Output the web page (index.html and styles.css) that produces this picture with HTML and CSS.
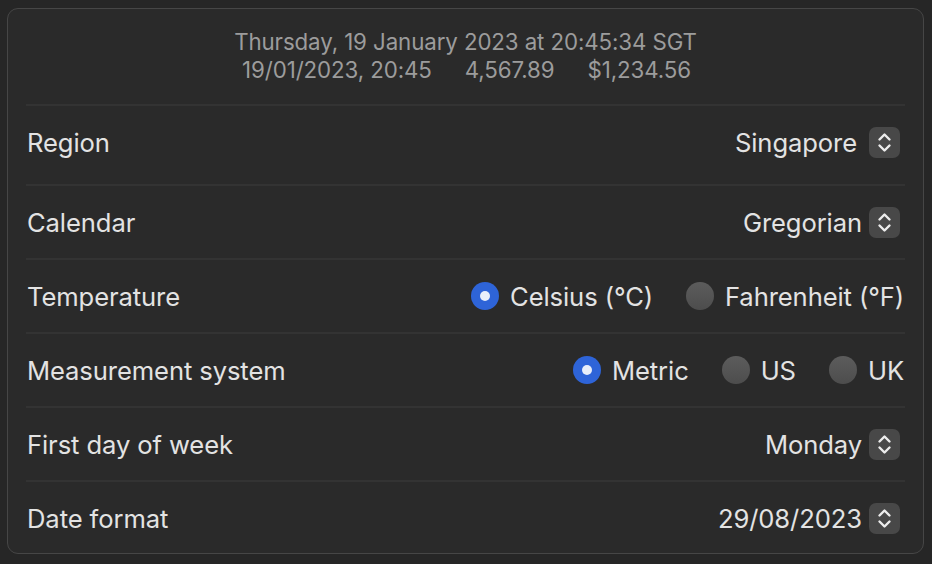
FILE: index.html
```html
<!DOCTYPE html>
<html lang="en">
<head>
<meta charset="utf-8">
<title>Language &amp; Region</title>
<link rel="stylesheet" href="styles.css">
</head>
<body>
<section class="card">
  <header class="preview">
    <div class="preview-line">Thursday, 19 January 2023 at 20:45:34 SGT</div>
    <div class="preview-line preview-values">
      <span>19/01/2023, 20:45</span><span>4,567.89</span><span>$1,234.56</span>
    </div>
  </header>

  <div class="row row-first">
    <span class="label">Region</span>
    <div class="popup popup-region">
      <span class="value">Singapore</span>
      <span class="stepper"><svg viewBox="0 0 31 31" width="31" height="31"><path d="M10.5 12.5 L15.5 7.5 L20.5 12.5 M10.5 18.5 L15.5 23.5 L20.5 18.5"/></svg></span>
    </div>
  </div>

  <div class="row">
    <span class="label">Calendar</span>
    <div class="popup">
      <span class="value">Gregorian</span>
      <span class="stepper"><svg viewBox="0 0 31 31" width="31" height="31"><path d="M10.5 12.5 L15.5 7.5 L20.5 12.5 M10.5 18.5 L15.5 23.5 L20.5 18.5"/></svg></span>
    </div>
  </div>

  <div class="row">
    <span class="label">Temperature</span>
    <div class="radios">
      <label class="radio"><span class="dot dot-on"></span>Celsius (°C)</label>
      <label class="radio"><span class="dot"></span>Fahrenheit (°F)</label>
    </div>
  </div>

  <div class="row">
    <span class="label">Measurement system</span>
    <div class="radios">
      <label class="radio"><span class="dot dot-on"></span>Metric</label>
      <label class="radio"><span class="dot"></span>US</label>
      <label class="radio"><span class="dot"></span>UK</label>
    </div>
  </div>

  <div class="row">
    <span class="label">First day of week</span>
    <div class="popup">
      <span class="value">Monday</span>
      <span class="stepper"><svg viewBox="0 0 31 31" width="31" height="31"><path d="M10.5 12.5 L15.5 7.5 L20.5 12.5 M10.5 18.5 L15.5 23.5 L20.5 18.5"/></svg></span>
    </div>
  </div>

  <div class="row row-last">
    <span class="label">Date format</span>
    <div class="popup">
      <span class="value">29/08/2023</span>
      <span class="stepper"><svg viewBox="0 0 31 31" width="31" height="31"><path d="M10.5 12.5 L15.5 7.5 L20.5 12.5 M10.5 18.5 L15.5 23.5 L20.5 18.5"/></svg></span>
    </div>
  </div>
</section>
</body>
</html>
```
FILE: styles.css
```css
html, body {
  margin: 0;
  padding: 0;
  background: #262626;
}
body {
  padding: 8px 8px 0 7px;
  font-family: Inter, "Noto Sans", sans-serif;
  color: #e3e3e3;
  -webkit-font-smoothing: antialiased;
}
.card {
  box-sizing: border-box;
  width: 917px;
  height: 546px;
  background: #2a2a2a;
  border: 1px solid #464646;
  border-radius: 11px;
  padding: 0 18px 0 18px;
}
.preview {
  height: 97px;
  border-bottom: 2px solid #333333;
  box-sizing: border-box;
  display: flex;
  flex-direction: column;
  align-items: center;
  padding-top: 19px;
  color: #9c9c9c;
  font-size: 22.3px;
  line-height: 28px;
  letter-spacing: -0.1px;
}
.preview-values {
  display: flex;
  gap: 33px;
  padding-left: 2px;
}
.row {
  display: flex;
  align-items: center;
  justify-content: space-between;
  height: 74px;
  border-bottom: 2px solid #333333;
  box-sizing: border-box;
  font-size: 25.6px;
  letter-spacing: -0.1px;
}
.row-first {
  height: 80px;
  padding-bottom: 6px;
}
.row-last {
  border-bottom: none;
  height: 72px;
}
.label {
  padding-left: 1px;
}
.popup {
  display: flex;
  align-items: center;
  gap: 7px;
  padding-right: 5px;
}
.popup-region {
  gap: 12px;
}
.stepper {
  width: 31px;
  height: 31px;
  border-radius: 7px;
  background: #484848;
  display: block;
}
.stepper svg {
  display: block;
}
.stepper path {
  fill: none;
  stroke: #ececec;
  stroke-width: 2.4;
  stroke-linecap: round;
  stroke-linejoin: round;
}
.radios {
  display: flex;
  align-items: center;
  gap: 33px;
  padding-right: 1px;
}
.radio {
  display: flex;
  align-items: center;
  gap: 11px;
}
.dot {
  box-sizing: border-box;
  width: 28px;
  height: 28px;
  border-radius: 50%;
  background: linear-gradient(#5c5c5c, #4d4d4d);
  position: relative;
  display: block;
}
.dot-on {
  background: #2e64d8;
}
.dot-on::after {
  content: "";
  position: absolute;
  left: 9px;
  top: 9px;
  width: 10px;
  height: 10px;
  border-radius: 50%;
  background: #e8eefa;
}
```
